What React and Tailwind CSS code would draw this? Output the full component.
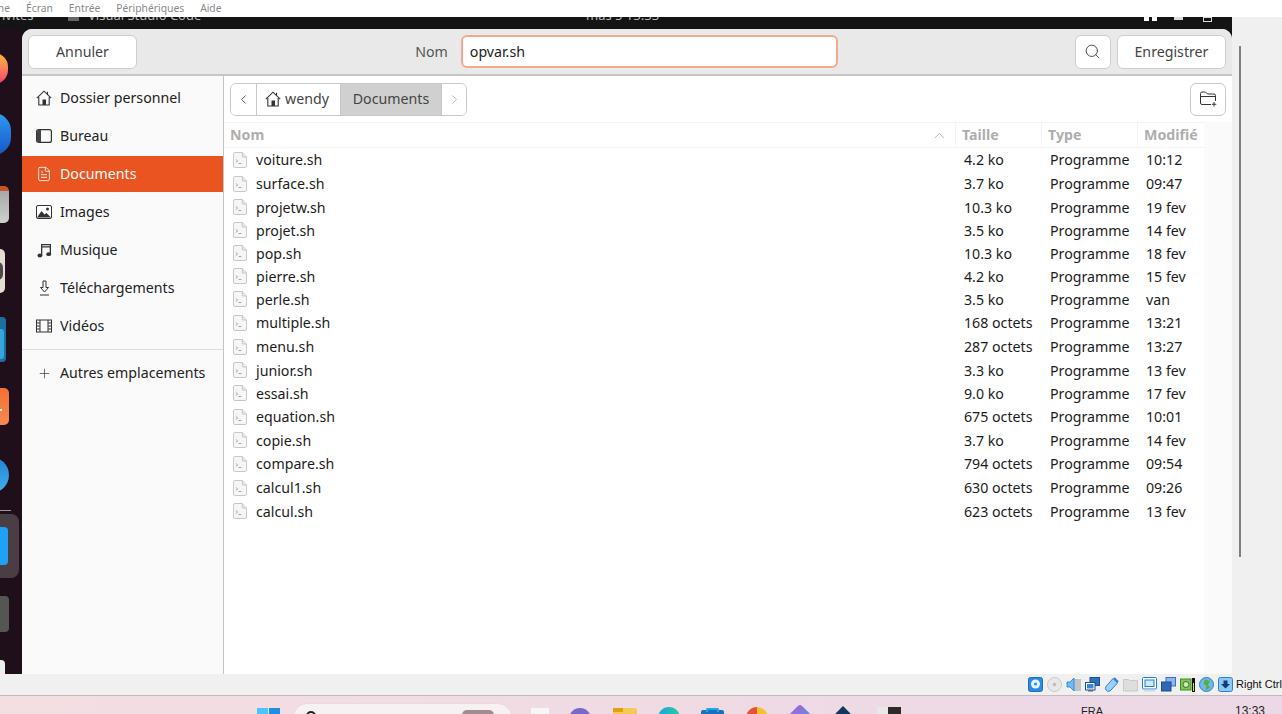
import { ChevronLeft, ChevronRight, ChevronUp, FileText, Plus, Search } from "lucide-react";

const FONT = "font-['Noto_Sans','Open_Sans',sans-serif]";

const FILES = [
  { name: "voiture.sh", size: "4.2 ko", date: "10:12", h: "h-[24px]" },
  { name: "surface.sh", size: "3.7 ko", date: "09:47", h: "h-[24px]" },
  { name: "projetw.sh", size: "10.3 ko", date: "19 fev", h: "h-[23px]" },
  { name: "projet.sh", size: "3.5 ko", date: "14 fev", h: "h-[23px]" },
  { name: "pop.sh", size: "10.3 ko", date: "18 fev", h: "h-[23px]" },
  { name: "pierre.sh", size: "4.2 ko", date: "15 fev", h: "h-[23px]" },
  { name: "perle.sh", size: "3.5 ko", date: "van", h: "h-[23px]" },
  { name: "multiple.sh", size: "168 octets", date: "13:21", h: "h-[24px]" },
  { name: "menu.sh", size: "287 octets", date: "13:27", h: "h-[24px]" },
  { name: "junior.sh", size: "3.3 ko", date: "13 fev", h: "h-[23px]" },
  { name: "essai.sh", size: "9.0 ko", date: "17 fev", h: "h-[23px]" },
  { name: "equation.sh", size: "675 octets", date: "10:01", h: "h-[24px]" },
  { name: "copie.sh", size: "3.7 ko", date: "14 fev", h: "h-[23px]" },
  { name: "compare.sh", size: "794 octets", date: "09:54", h: "h-[24px]" },
  { name: "calcul1.sh", size: "630 octets", date: "09:26", h: "h-[24px]" },
  { name: "calcul.sh", size: "623 octets", date: "13 fev", h: "h-[23px]" },
];

function HomeIcon({ size = 16 }) {
  return (
    <svg width={size} height={size} viewBox="0 0 16 16" fill="none" stroke="#333" strokeWidth="1.1">
      <path d="M.8 8.200L8 1.200l7.200 7" />
      <path d="M2.800 7v8h10.400V7" />
      <path d="M11.500 1.800v2.600" />
      <rect x="6.500" y="9.500" width="3.500" height="5.500" fill="#333" stroke="none" />
    </svg>
  );
}

function BureauIcon() {
  return (
    <svg width="16" height="14" viewBox="0 0 16 14">
      <rect x="0.600" y="0.600" width="14.800" height="12.800" rx="2" fill="none" stroke="#333" strokeWidth="1.200" />
      <path d="M1 2.500A1.500 1.500 0 0 1 2.500 1H5v12H2.500A1.500 1.500 0 0 1 1 11.500z" fill="#444" />
    </svg>
  );
}

function ImagesIcon() {
  return (
    <svg width="16" height="14" viewBox="0 0 16 14">
      <rect x="0.500" y="0.500" width="15" height="13" rx="1.500" fill="#fff" stroke="#333" />
      <path d="M1 12.500L5.500 6l3 3.500 2-1.500 4.500 4.500z" fill="#333" />
      <circle cx="11.500" cy="4" r="1.500" fill="#333" />
    </svg>
  );
}

function MusicIcon() {
  return (
    <svg width="15" height="15" viewBox="0 0 15 15" fill="#333">
      <path d="M4 1h10v10h-1.300V4.500H5.300V12.500H4zM5.300 2.300v1h7.400v-1z" />
      <ellipse cx="2.900" cy="12.500" rx="2.400" ry="1.900" />
      <ellipse cx="11.700" cy="11.200" rx="2.400" ry="1.900" />
    </svg>
  );
}

function DownloadIcon() {
  return (
    <svg width="15" height="16" viewBox="0 0 15 16" fill="none" stroke="#333" strokeWidth="1">
      <path d="M6 1h3v6.500h2.500L7.500 12 3.500 7.500H6z" />
      <path d="M3 15h9" />
    </svg>
  );
}

function FilmIcon() {
  return (
    <svg width="16" height="14" viewBox="0 0 16 14" fill="none" stroke="#333" strokeWidth="1">
      <rect x="0.500" y="1" width="15" height="12" />
      <path d="M4 1v12M12 1v12M.5 4h3.500M.5 7h3.500M.5 10h3.500M12 4h3.500M12 7h3.500M12 10h3.500" />
    </svg>
  );
}

function NewFolderIcon() {
  return (
    <svg width="17" height="16" viewBox="0 0 17 16" fill="none" stroke="#333" strokeWidth="1">
      <path d="M11 13.500H2A1.500 1.500 0 0 1 .5 12V2.500A1.500 1.500 0 0 1 2 1h3.500l2 2H14a1.500 1.500 0 0 1 1.500 1.500V10" />
      <path d="M.5 5.500h15" />
      <path d="M14 11v4.500M11.800 13.250h4.500" />
    </svg>
  );
}

function ScriptIcon() {
  return (
    <svg width="14" height="16" viewBox="0 0 15 16" preserveAspectRatio="none">
      <path
        d="M2 .5h8l4.500 4.500v9a1.500 1.500 0 0 1-1.500 1.500H2A1.500 1.500 0 0 1 .5 14V2A1.500 1.500 0 0 1 2 .5z"
        fill="#f6f6f6"
        stroke="#c6c6c6"
      />
      <path d="M10 .5v4.500h4.500" fill="#e8e8e8" stroke="#c6c6c6" />
      <path d="M3 7.500l2 1.500-2 1.500M6 11.500h3" fill="none" stroke="#9a9a9a" strokeWidth="0.900" />
    </svg>
  );
}

function SideItem({ icon, label, active }) {
  return (
    <div
      className={`flex items-center gap-[8px] pl-[14px] text-[14.200px] ${
        active ? "my-[1px] h-[36px] bg-[#e95420] text-white" : "h-[38px] text-[#222]"
      }`}
    >
      <span className="flex w-[16px] justify-center">{icon}</span>
      <span>{label}</span>
    </div>
  );
}

// Dock icons are cut off by the dialog, only their right edge shows
function Dock() {
  return (
    <div className="relative w-[22px] shrink-0 self-stretch overflow-hidden bg-[#1f0f1b]">
      <div className="absolute left-[-20px] top-[24px] h-[31px] w-[28px] rounded-full bg-gradient-to-b from-[#ffb52e] to-[#f0386b]" />
      <div className="absolute left-[-24px] top-[84px] h-[42px] w-[35px] rounded-full bg-gradient-to-b from-[#2f9bf0] to-[#1a55c8]" />
      <div className="absolute left-[-14px] top-[157px] h-[37px] w-[23px] rounded-[5px] border-t-[5px] border-[#c9542a] bg-gradient-to-b from-[#a8a8a8] to-[#cfcfcf]" />
      <div className="absolute left-[-14px] top-[220px] h-[44px] w-[19px] rounded-[5px] bg-[#e2ded2]" />
      <div className="absolute left-[-8px] top-[233px] h-[18px] w-[11px] rounded-full bg-[#4a4a4a]" />
      <div className="absolute left-[-14px] top-[288px] h-[45px] w-[20px] rounded-[4px] bg-[#1d6fa0]" />
      <div className="absolute left-[-14px] top-[300px] h-[30px] w-[18px] rounded-[3px] bg-[#35a5dc]" />
      <div className="absolute left-[-14px] top-[359px] h-[37px] w-[23px] rounded-[5px] bg-gradient-to-b from-[#f66f30] to-[#f58a50]" />
      <div className="absolute left-0 top-[380px] h-[2px] w-[2px] bg-white" />
      <div className="absolute left-[-27px] top-[428px] h-[36px] w-[36px] rounded-full bg-gradient-to-b from-[#2183d0] to-[#45b0ef]" />
      <div className="absolute left-0 top-[481px] h-px w-[11px] bg-[#999]" />
      <div className="absolute left-[-14px] top-[485px] h-[64px] w-[33px] rounded-[8px] bg-[#4a3d43]" />
      <div className="absolute left-[-10px] top-[498px] h-[38px] w-[18px] rounded-[4px] bg-[#1fa2f5]" />
      <div className="absolute left-[-14px] top-[567px] h-[36px] w-[23px] rounded-[4px] bg-[#555553]" />
      <div className="absolute left-[-14px] top-[631px] h-[20px] w-[19px] rounded-[4px] bg-[#eeeeee]" />
    </div>
  );
}

function Sidebar() {
  return (
    <div className="flex w-[202px] shrink-0 flex-col border-r border-[#c4c4c4] bg-[#fafafa] pt-[3px]">
      <SideItem icon={<HomeIcon />} label="Dossier personnel" />
      <SideItem icon={<BureauIcon />} label="Bureau" />
      <SideItem icon={<FileText size={16} strokeWidth={1.300} color="#fff" />} label="Documents" active />
      <SideItem icon={<ImagesIcon />} label="Images" />
      <SideItem icon={<MusicIcon />} label="Musique" />
      <SideItem icon={<DownloadIcon />} label="Téléchargements" />
      <SideItem icon={<FilmIcon />} label="Vidéos" />
      <div className="mt-[4px] border-t border-[#dcdcdc] pt-[4px]">
        <SideItem icon={<Plus size={15} strokeWidth={1.100} color="#333" />} label="Autres emplacements" />
      </div>
    </div>
  );
}

function PathBar() {
  return (
    <div className="flex h-[46px] shrink-0 items-center justify-between px-[6px]">
      <div className="flex h-[33px] overflow-hidden rounded-[6px] border border-[#c8c8c8] text-[14.200px]">
        <div className="flex w-[26px] items-center justify-center border-r border-[#c8c8c8] bg-white">
          <ChevronLeft size={15} strokeWidth={1.400} color="#444" />
        </div>
        <div className="flex w-[84px] items-center gap-[4px] border-r border-[#c8c8c8] bg-white pl-[8px] text-[#444]">
          <HomeIcon size={16} />
          <span>wendy</span>
        </div>
        <div className="flex w-[101px] items-center justify-center border-r border-[#c8c8c8] bg-[#d0d0d0] text-[#444]">
          Documents
        </div>
        <div className="flex w-[24px] items-center justify-center bg-white">
          <ChevronRight size={15} strokeWidth={1.400} color="#aaa" />
        </div>
      </div>
      <div className="flex h-[33px] w-[36px] items-center justify-center rounded-[6px] border border-[#c8c8c8] bg-white">
        <NewFolderIcon />
      </div>
    </div>
  );
}

function FileList() {
  return (
    <div className="flex w-[980px] shrink-0 flex-col bg-white">
      <div className="flex h-[26px] shrink-0 items-center border-y border-[#f3f3f3] text-[14.200px] font-bold text-[#aeaeae]">
        <div className="flex h-full w-[732px] items-center justify-between border-r border-[#f3f3f3] pl-[6px] pr-[7px]">
          <span>Nom</span>
          <ChevronUp size={17} strokeWidth={1} color="#999" />
        </div>
        <div className="flex h-full w-[86px] items-center border-r border-[#f3f3f3] pl-[6px]">Taille</div>
        <div className="flex h-full w-[96px] items-center border-r border-[#f3f3f3] pl-[6px]">Type</div>
        <div className="pl-[6px]">Modifié</div>
      </div>
      <div>
        {FILES.map((f) => (
          <div key={f.name} className={`flex items-center text-[14.200px] text-[#1c1c1c] ${f.h}`}>
            <div className="flex w-[731px] items-center gap-[9px] pl-[9px]">
              <ScriptIcon />
              <span>{f.name}</span>
            </div>
            <div className="w-[86px] pl-[9px]">{f.size}</div>
            <div className="w-[96px] pl-[9px]">Programme</div>
            <div className="pl-[9px]">{f.date}</div>
          </div>
        ))}
      </div>
    </div>
  );
}

function Dialog() {
  return (
    <div className="flex min-w-0 grow flex-col overflow-hidden rounded-t-[10px] bg-white">
      <div className="flex h-[47px] shrink-0 items-center justify-between border-b-2 border-[#c6c6c6] bg-[#e9e9e9] px-[6px]">
        <div className="flex h-[34px] w-[109px] items-center justify-center rounded-[6px] border border-[#cdcdcd] bg-white text-[14.200px] text-[#444]">
          Annuler
        </div>
        <div className="ml-[41px] flex items-center gap-[13px]">
          <span className="text-[14.200px] text-[#555]">Nom</span>
          <div className="flex h-[33px] w-[377px] items-center rounded-[6px] border-2 border-[#f4a98f] bg-white pl-[7px] text-[14.200px] text-[#222]">
            opvar.sh
          </div>
        </div>
        <div className="flex items-center gap-[6px]">
          <div className="flex h-[34px] w-[36px] items-center justify-center rounded-[6px] border border-[#cdcdcd] bg-white">
            <Search size={17} strokeWidth={1.300} color="#444" />
          </div>
          <div className="flex h-[34px] w-[109px] items-center justify-center rounded-[6px] border border-[#cdcdcd] bg-white text-[14.200px] text-[#444]">
            Enregistrer
          </div>
        </div>
      </div>
      <div className="flex min-h-0 grow">
        <Sidebar />
        <div className="flex min-w-0 grow flex-col bg-[#fafafa]">
          <div className="bg-white">
            <PathBar />
          </div>
          <div className="flex grow">
            <FileList />
          </div>
        </div>
      </div>
    </div>
  );
}

// VirtualBox status bar indicators
function StatusIcons() {
  return (
    <div className="flex items-center gap-[4px]">
      <svg width="15" height="15" viewBox="0 0 15 15">
        <rect x="0.500" y="0.500" width="14" height="14" rx="2" fill="#2a8be0" stroke="#1a6fc0" />
        <circle cx="7.500" cy="7" r="4.500" fill="#e8f4ff" />
        <circle cx="7.500" cy="7" r="1.500" fill="#2a8be0" />
      </svg>
      <svg width="15" height="15" viewBox="0 0 15 15">
        <circle cx="7.500" cy="7.500" r="7" fill="#e8e8e8" stroke="#c8c8c8" />
        <circle cx="7.500" cy="7.500" r="1.800" fill="#bcbcbc" />
      </svg>
      <svg width="15" height="15" viewBox="0 0 15 15">
        <rect x="8" y="2" width="7" height="12" fill="#c4c4c4" />
        <path d="M1 5h3l4-4v13L4 10H1z" fill="#6fbdf0" stroke="#1f7fd8" strokeWidth="0.800" />
      </svg>
      <svg width="15" height="15" viewBox="0 0 15 15">
        <rect x="5" y="0.500" width="9.500" height="8" fill="#2f6fc4" stroke="#1c4f94" />
        <rect x="0.500" y="5.500" width="9.500" height="7.500" fill="#fff" stroke="#1c4f94" />
        <rect x="2" y="7" width="6.500" height="4.500" fill="#3f86d8" />
        <rect x="3" y="13" width="5" height="1.500" fill="#666" />
      </svg>
      <svg width="15" height="15" viewBox="0 0 15 15">
        <path d="M9 1.500l4.500 4.500-6.500 7a3 3 0 0 1-4.500.5 3 3 0 0 1-.5-4z" fill="#9ed0f7" stroke="#2a80d0" />
        <path d="M10 1l4 4" stroke="#2a80d0" strokeWidth="2" />
      </svg>
      <svg width="15" height="15" viewBox="0 0 15 15">
        <path d="M.5 2.500h5l1 1h8v10.500H.5z" fill="#dedede" stroke="#c8c8c8" />
      </svg>
      <svg width="15" height="15" viewBox="0 0 15 15">
        <rect x="0.500" y="0.500" width="14" height="11.500" rx="1" fill="#fff" stroke="#1f7fd8" />
        <rect x="3" y="3" width="9" height="6.500" fill="#cfe8fb" stroke="#1f7fd8" />
        <rect x="2" y="12.500" width="11" height="2" fill="#d8d8d8" />
      </svg>
      <svg width="15" height="15" viewBox="0 0 15 15">
        <rect x="5" y="0.500" width="9.500" height="8.500" fill="#8ab8ee" stroke="#3a6fc0" />
        <rect x="0.500" y="5" width="9.500" height="9" fill="#2f68b8" stroke="#1c4a90" />
      </svg>
      <svg width="15" height="15" viewBox="0 0 15 15">
        <rect x="0.500" y="2" width="10.500" height="11" fill="#7cc850" stroke="#3f8a28" />
        <circle cx="6" cy="7.500" r="3" fill="#cfe8b8" stroke="#3f6a28" />
        <rect x="12" y="1" width="3" height="14" fill="#111" />
        <rect x="13" y="6" width="1" height="8" fill="#e8e030" />
      </svg>
      <svg width="15" height="15" viewBox="0 0 15 15">
        <circle cx="7.500" cy="7.500" r="7" fill="#6fb8ee" stroke="#2a80d0" />
        <path d="M6 2.500l5 1.500-2 4 2 2.500-4.500 3 1-5-3-1.500z" fill="#58b030" />
      </svg>
      <svg width="15" height="15" viewBox="0 0 15 15">
        <rect x="0.500" y="0.500" width="14" height="14" rx="2" fill="#8ec9f5" stroke="#2a80d0" />
        <path d="M5.500 3.500h4V7H12l-4.500 4.500L3 7h2.500z" fill="#123c78" />
      </svg>
      <span className="ml-[-1px] w-[46px] whitespace-nowrap font-['Liberation_Sans',sans-serif] text-[11px] text-[#111]">
        Right Ctrl
      </span>
    </div>
  );
}

function Taskbar() {
  return (
    <div className="relative h-[18px] shrink-0 overflow-hidden bg-gradient-to-r from-[#f3dee2] to-[#ecd8e6]">
      <div className="flex items-start pl-[257px] pt-[12px]">
        <div className="grid h-[22px] w-[23px] grid-cols-2 gap-[1px]">
          <div className="bg-[#4cc2ff]" />
          <div className="bg-[#1a8fe3]" />
        </div>
        <div className="relative ml-[13px] mt-[-5px] h-[30px] w-[219px] rounded-[14px] border border-[#ecd9dd] bg-[#f8f1f3]">
          <div className="absolute left-[12px] top-[7px] h-[10px] w-[10px] rounded-full border-2 border-[#222]" />
          <div className="absolute left-[168px] top-[6px] h-[14px] w-[32px] rounded-t-[5px] bg-[#a08c90]" />
        </div>
      </div>
      <div className="absolute left-[531px] top-[12px] h-[12px] w-[18px] bg-[#f6f6f6]" />
      <div className="absolute left-[569px] top-[12px] h-[22px] w-[22px] rounded-full bg-[#7a68c8]" />
      <div className="absolute left-[613px] top-[12px] h-[16px] w-[24px] rounded-t-[2px] bg-[#f3c95a]" />
      <div className="absolute left-[613px] top-[12px] h-[4px] w-[10px] bg-[#e0a010]" />
      <div className="absolute left-[658px] top-[11px] h-[22px] w-[22px] rounded-full bg-gradient-to-r from-[#18a8d8] to-[#30c8a0]" />
      <div className="absolute left-[701px] top-[14px] h-[12px] w-[23px] rounded-t-[2px] bg-[#1a6fc0]" />
      <div className="absolute left-[706px] top-[12px] h-[4px] w-[13px] rounded-t-[2px] border-2 border-b-0 border-[#22a8e8]" />
      <div className="absolute left-[746px] top-[11px] h-[22px] w-[22px] rounded-full bg-[conic-gradient(#f2c230_0deg,#f2c230_90deg,#3aa850_90deg,#3aa850_180deg,#e8503a_180deg,#e8503a_360deg)]" />
      <div className="absolute left-[790px] top-[12px] h-[20px] w-[20px] rotate-45 rounded-[3px] bg-gradient-to-r from-[#9a68d8] to-[#4a90e0]" />
      <div className="absolute left-[836px] top-[13px] h-[14px] w-[14px] rotate-45 bg-[#12365e]" />
      <div className="absolute left-[877px] top-[11px] flex h-[12px] w-[24px] bg-[#2b2b2b]">
        <span className="w-[11px] bg-[#e8e8e8]" />
      </div>
      <span className="absolute left-[1081px] top-[10px] font-['Liberation_Sans',sans-serif] text-[11px] leading-none text-[#222]">
        FRA
      </span>
      <span className="absolute left-[1235px] top-[9px] font-['Liberation_Sans',sans-serif] text-[12px] leading-none text-[#222]">
        13:33
      </span>
    </div>
  );
}

export default function App() {
  return (
    <div className={`flex h-[714px] w-[1282px] flex-col overflow-hidden bg-[#f0f0f0] ${FONT}`}>
      {/* VirtualBox menu */}
      <div className="flex h-[17px] shrink-0 items-center gap-[16px] bg-white text-[10.300px] leading-none text-[#8a8a8a]">
        <div className="flex w-[10px] shrink-0 justify-end overflow-hidden">
          <span className="shrink-0">ne</span>
        </div>
        <span>Écran</span>
        <span>Entrée</span>
        <span>Périphériques</span>
        <span>Aide</span>
      </div>
      <div className="flex min-h-0 grow">
        <div className="flex w-[1232px] shrink-0 flex-col bg-[#141414]">
          {/* Ubuntu top bar, cut off by the menu */}
          <div className="relative h-[12px] shrink-0 overflow-hidden text-[13px] text-[#bbb]">
            <span className="absolute left-[2px] top-[-11px]">ivités</span>
            <div className="absolute left-[68px] top-0 h-[4px] w-[11px] bg-[#666]" />
            <span className="absolute left-[88px] top-[-11px]">Visual Studio Code</span>
            <span className="absolute left-[586px] top-[-11px]">mas 5  13:33</span>
            <div className="absolute left-[1144px] top-0 h-[4px] w-[5px] bg-white" />
            <div className="absolute left-[1152px] top-0 h-[4px] w-[5px] bg-white" />
            <div className="absolute left-[1174px] top-0 h-[3px] w-[9px] bg-[#ddd]" />
            <div className="absolute left-[1203px] top-0 h-[5px] w-[9px] border border-[#ddd]" />
          </div>
          <div className="flex min-h-0 grow">
            <Dock />
            <Dialog />
          </div>
        </div>
        <div className="w-[50px] pl-[7px] pt-[29px]">
          <div className="h-[511px] w-[2px] bg-[#7f7f7f]" />
        </div>
      </div>
      <div className="flex h-[22px] shrink-0 items-center justify-end border-b border-[#c9b8bb] bg-[#f0f0f0]">
        <StatusIcons />
      </div>
      <Taskbar />
    </div>
  );
}
